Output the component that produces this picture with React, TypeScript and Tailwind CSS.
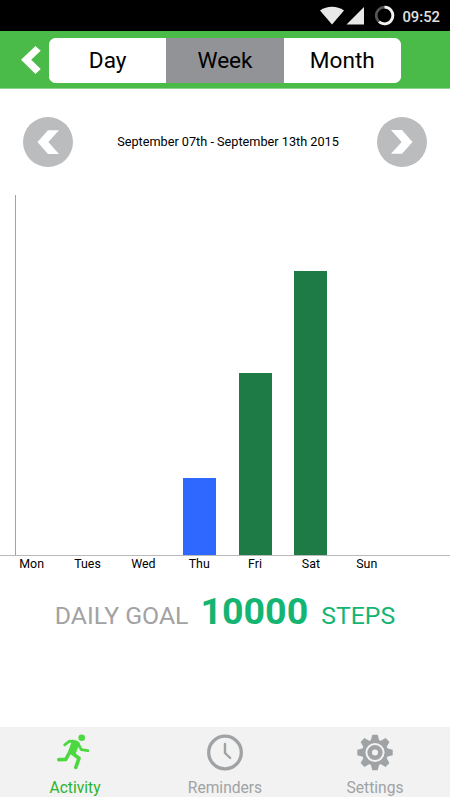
import { useState } from 'react';

const tabs = ['Day', 'Week', 'Month'];

// Bar heights are in pixels above the x axis
const week = [
  { day: 'Mon', height: 0, color: 'bg-[#1e7b46]' },
  { day: 'Tues', height: 0, color: 'bg-[#1e7b46]' },
  { day: 'Wed', height: 0, color: 'bg-[#1e7b46]' },
  { day: 'Thu', height: 77, color: 'bg-[#2f68ff]' },
  { day: 'Fri', height: 182, color: 'bg-[#1e7b46]' },
  { day: 'Sat', height: 284, color: 'bg-[#1e7b46]' },
  { day: 'Sun', height: 0, color: 'bg-[#1e7b46]' },
];

function StatusBar() {
  return (
    <div className="flex h-[31px] items-center justify-end bg-black pr-[10px] text-white">
      <svg width="76" height="24" viewBox="319 4 76 24" className="mr-[7px]">
        <path d="M320 10.5C327 5.5 337 5.5 344 10.5L332 24.5Z" fill="#e8e8e8" />
        <path d="M364 7V24.5H346.5Z" fill="#e8e8e8" />
        <circle cx="384.5" cy="15.5" r="8.3" fill="none" stroke="#555" strokeWidth="2.8" />
        <path d="M384.5 7.2A8.3 8.3 0 1 1 379 21.7" fill="none" stroke="#f2f2f2" strokeWidth="2.8" />
      </svg>
      <span className="mt-[3px] text-[14.8px] font-medium leading-none text-[#e0e0e0]">09:52</span>
    </div>
  );
}

function Header() {
  const [active, setActive] = useState('Week');

  return (
    <header className="flex h-[58px] border-b border-[#8fd28d] bg-[#4aba48] pt-[7px]">
      <button className="flex w-[49px] pl-[21px] pt-[8px]" aria-label="Back">
        <svg width="20" height="28" viewBox="0 0 20 28">
          <path d="M0 13.8L14.5 0L19.7 4.8L10.2 13.8L19.7 22.9L14.5 28Z" fill="#fff" />
        </svg>
      </button>
      <div className="flex h-[45px] w-[352px] overflow-hidden rounded-[7px] bg-white">
        {tabs.map((tab) => (
          <button
            key={tab}
            onClick={() => setActive(tab)}
            className={`flex-1 pt-[2px] text-[22.6px] leading-none ${active === tab ? 'bg-[#929397]' : 'bg-white'}`}
          >
            {tab}
          </button>
        ))}
      </div>
    </header>
  );
}

function ArrowButton({ direction }: { direction: 'prev' | 'next' }) {
  return (
    <button aria-label={direction}>
      <svg width="50" height="50" viewBox="0 0 50 50" className={direction === 'next' ? 'rotate-180' : ''}>
        <circle cx="25" cy="25" r="25" fill="#bbbcbe" />
        <path d="M14.5 25L25 13.3H36L25.3 25L36 37H25Z" fill="#fff" />
      </svg>
    </button>
  );
}

function StepsChart() {
  return (
    <section className="relative mt-[28px]">
      <div className="absolute left-[15px] top-0 h-[360px] w-px bg-[#a3a3a3]" />
      <div className="flex h-[361px] items-end border-b border-[#b9b9b9] pl-[3.75px]">
        {week.map(({ day, height, color }) => (
          <div key={day} className="flex w-[55.85px] justify-center">
            <div className={`w-[33px] ${color}`} style={{ height }} />
          </div>
        ))}
      </div>
      <div className="flex pl-[3.75px] text-[12.4px] leading-[15px]">
        {week.map(({ day }) => (
          <span key={day} className="w-[55.85px] text-center">{day}</span>
        ))}
      </div>
    </section>
  );
}

function RunnerIcon() {
  return (
    <svg width="36" height="38" viewBox="0 0 36 38" fill="none" stroke="#4cd93f" strokeLinecap="round" strokeLinejoin="round">
      <circle cx="24.7" cy="3.8" r="3.3" fill="#4cd93f" stroke="none" />
      <path d="M7.7 10.8L12.5 7.2L19 8" strokeWidth="2.8" />
      <path d="M21 9.5L24.3 15.6L30.8 16.7" strokeWidth="2.8" />
      <path d="M15.5 7.3L20.8 9.2L18.2 16.2L17 19.4L12.8 17.5L16 9Z" fill="#4cd93f" strokeWidth="3.4" />
      <path d="M12 19.5L8.8 25.4L1.8 25.6" strokeWidth="3.6" />
      <path d="M15 19L22 24.3L18.8 33.3" strokeWidth="3.6" />
    </svg>
  );
}

function ClockIcon() {
  return (
    <svg width="36" height="38" viewBox="0 0 36 38" fill="none" stroke="#a0a3a5">
      <circle cx="18" cy="18.5" r="16.3" strokeWidth="3.3" />
      <path d="M18 10V19L23.2 24" strokeWidth="2.4" strokeLinecap="round" strokeLinejoin="round" />
    </svg>
  );
}

function GearIcon() {
  return (
    <svg width="36" height="38" viewBox="-18 -18.5 36 38" fill="#a0a3a5">
      {[0, 45, 90, 135, 180, 225, 270, 315].map((angle) => (
        <path key={angle} d="M-4.5 -11L-2.7 -17.7H2.7L4.5 -11Z" transform={`rotate(${angle})`} />
      ))}
      <circle r="13" />
      <circle r="8.6" fill="none" stroke="#f2f2f2" strokeWidth="2" />
      <circle r="3" fill="#f2f2f2" />
    </svg>
  );
}

function BottomNav() {
  const items = [
    { label: 'Activity', icon: <RunnerIcon />, color: 'text-[#2cb52c]' },
    { label: 'Reminders', icon: <ClockIcon />, color: 'text-[#a0a2a4]' },
    { label: 'Settings', icon: <GearIcon />, color: 'text-[#a0a2a4]' },
  ];

  return (
    <nav className="mb-[3px] flex h-[70px] bg-[#f2f2f2]">
      {items.map(({ label, icon, color }) => (
        <button key={label} className={`flex flex-1 flex-col items-center pt-[7px] ${color}`}>
          {icon}
          <span className="mt-[7px] text-[15.6px] leading-[18px]">{label}</span>
        </button>
      ))}
    </nav>
  );
}

export default function App() {
  return (
    <div className="flex h-[800px] w-[450px] flex-col overflow-hidden bg-white font-['Roboto',sans-serif] text-black">
      <StatusBar />
      <Header />
      <div className="mt-[28px] flex h-[50px] items-center justify-between px-[23px]">
        <ArrowButton direction="prev" />
        <span className="ml-[6px] text-[12.7px]">September 07th - September 13th 2015</span>
        <ArrowButton direction="next" />
      </div>
      <StepsChart />
      <div className="mt-[17px] flex items-baseline justify-center whitespace-nowrap leading-[46px] text-[#14b573]">
        <span className="text-[24.8px] text-[#a2a2a2]">DAILY GOAL</span>
        <span className="ml-[12px] text-[37.6px] font-bold">10000</span>
        <span className="ml-[13px] text-[24.8px]">STEPS</span>
      </div>
      <div className="flex-1" />
      <BottomNav />
    </div>
  );
}
